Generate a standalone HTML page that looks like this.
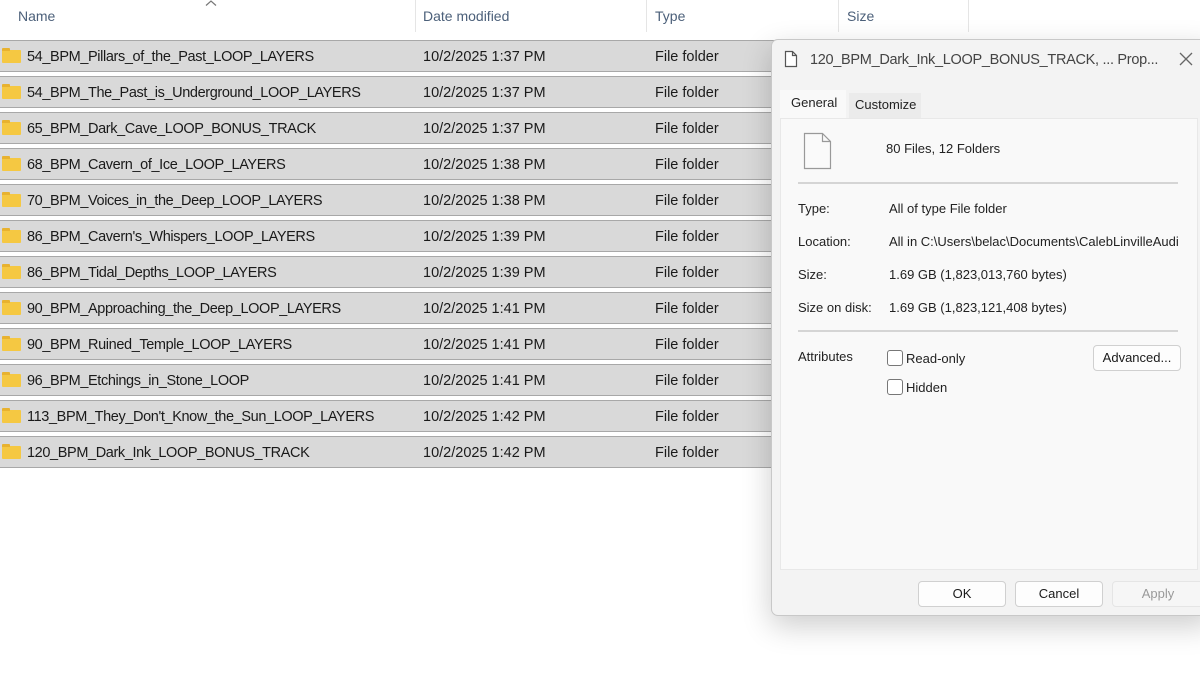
<!DOCTYPE html>
<html><head><style>
body{margin:0;width:1200px;height:675px;background:#fff;font-family:"Liberation Sans",sans-serif;position:relative;overflow:hidden;color:#1a1a1a}
.hd{position:absolute;top:8px;font-size:14px;color:#4c607a}
.sep{position:absolute;top:0;width:1px;height:32px;background:#e5e5e5}
.row{position:absolute;left:0;width:800px;height:30px;background:#d9d9d9;border-top:1px solid #a8a8a8;border-bottom:1px solid #a8a8a8;font-size:14.5px}
.row span{position:absolute;top:8px}
.row span:nth of-type(1){}
.nm{letter-spacing:-0.38px}
.fold{position:absolute;left:2px;top:9px;width:19px;height:13px;background:#f5c842;border-radius:1px}
.fold:before{content:"";position:absolute;left:0;top:-2px;width:8px;height:3px;background:#e8b22f;border-radius:1px 1px 0 0}
.dlg{position:absolute;left:771px;top:39px;width:440px;height:575px;background:#f3f3f3;border:1px solid #c8c8c8;border-radius:7px;box-shadow:0 10px 30px rgba(0,0,0,.2)}
.dlg *{position:absolute}
.lbl{font-size:13px;color:#222;white-space:nowrap}
.btn{background:#fdfdfd;border:1px solid #d0d0d0;border-radius:4px;font-size:13px;text-align:center;line-height:24px;height:24px}
.cb{width:14px;height:14px;border:1px solid #777;border-radius:3px;background:#fff}
</style></head><body>
<div class="hd" style="left:18px">Name</div>
<svg style="position:absolute;left:205px;top:0" width="12" height="6" viewBox="0 0 12 6"><path d="M1 5.5L6 1l5 4.5" fill="none" stroke="#777" stroke-width="1.2"/></svg>
<div class="hd" style="left:423px">Date modified</div>
<div class="hd" style="left:655px">Type</div>
<div class="hd" style="left:847px">Size</div>
<div class="sep" style="left:415px"></div><div class="sep" style="left:646px"></div><div class="sep" style="left:838px"></div><div class="sep" style="left:968px"></div>

<div class="row" style="top:40px"><div class="fold"></div><span class="nm" style="left:27px">54_BPM_Pillars_of_the_Past_LOOP_LAYERS</span><span style="left:423px">10/2/2025 1:37 PM</span><span style="left:655px">File folder</span></div>
<div class="row" style="top:76px"><div class="fold"></div><span class="nm" style="left:27px">54_BPM_The_Past_is_Underground_LOOP_LAYERS</span><span style="left:423px">10/2/2025 1:37 PM</span><span style="left:655px">File folder</span></div>
<div class="row" style="top:112px"><div class="fold"></div><span class="nm" style="left:27px">65_BPM_Dark_Cave_LOOP_BONUS_TRACK</span><span style="left:423px">10/2/2025 1:37 PM</span><span style="left:655px">File folder</span></div>
<div class="row" style="top:148px"><div class="fold"></div><span class="nm" style="left:27px">68_BPM_Cavern_of_Ice_LOOP_LAYERS</span><span style="left:423px">10/2/2025 1:38 PM</span><span style="left:655px">File folder</span></div>
<div class="row" style="top:184px"><div class="fold"></div><span class="nm" style="left:27px">70_BPM_Voices_in_the_Deep_LOOP_LAYERS</span><span style="left:423px">10/2/2025 1:38 PM</span><span style="left:655px">File folder</span></div>
<div class="row" style="top:220px"><div class="fold"></div><span class="nm" style="left:27px">86_BPM_Cavern's_Whispers_LOOP_LAYERS</span><span style="left:423px">10/2/2025 1:39 PM</span><span style="left:655px">File folder</span></div>
<div class="row" style="top:256px"><div class="fold"></div><span class="nm" style="left:27px">86_BPM_Tidal_Depths_LOOP_LAYERS</span><span style="left:423px">10/2/2025 1:39 PM</span><span style="left:655px">File folder</span></div>
<div class="row" style="top:292px"><div class="fold"></div><span class="nm" style="left:27px">90_BPM_Approaching_the_Deep_LOOP_LAYERS</span><span style="left:423px">10/2/2025 1:41 PM</span><span style="left:655px">File folder</span></div>
<div class="row" style="top:328px"><div class="fold"></div><span class="nm" style="left:27px">90_BPM_Ruined_Temple_LOOP_LAYERS</span><span style="left:423px">10/2/2025 1:41 PM</span><span style="left:655px">File folder</span></div>
<div class="row" style="top:364px"><div class="fold"></div><span class="nm" style="left:27px">96_BPM_Etchings_in_Stone_LOOP</span><span style="left:423px">10/2/2025 1:41 PM</span><span style="left:655px">File folder</span></div>
<div class="row" style="top:400px"><div class="fold"></div><span class="nm" style="left:27px">113_BPM_They_Don't_Know_the_Sun_LOOP_LAYERS</span><span style="left:423px">10/2/2025 1:42 PM</span><span style="left:655px">File folder</span></div>
<div class="row" style="top:436px"><div class="fold"></div><span class="nm" style="left:27px">120_BPM_Dark_Ink_LOOP_BONUS_TRACK</span><span style="left:423px">10/2/2025 1:42 PM</span><span style="left:655px">File folder</span></div>

<div class="dlg">
  <svg style="left:12px;top:10px" width="14" height="18" viewBox="0 0 14 18"><path d="M1.5 1.5h7l4 4v11h-11z M8.5 1.5v4h4" fill="#fff" stroke="#555" stroke-width="1.2"/></svg>
  <div style="left:38px;top:12px;font-size:14.5px;color:#444;white-space:nowrap;letter-spacing:-0.3px">120_BPM_Dark_Ink_LOOP_BONUS_TRACK, ... Prop...</div>
  <svg style="left:407px;top:12px" width="14" height="14" viewBox="0 0 14 14"><path d="M1 1L13 13M13 1L1 13" stroke="#666" stroke-width="1.3"/></svg>
  <div style="left:8px;top:50px;width:66px;height:30px;background:#f9f9f9"></div>
  <div class="lbl" style="left:19px;top:55px">General</div>
  <div style="left:77px;top:53px;width:72px;height:25px;background:#ebebeb"></div>
  <div class="lbl" style="left:83px;top:57px">Customize</div>
  <div style="left:8px;top:78px;width:416px;height:450px;background:#f9f9f9;border:1px solid #e8e8e8"></div>
  <svg style="left:31px;top:92px" width="30" height="38" viewBox="0 0 30 38"><path d="M1.5 1.5h18l8 8v27h-26z M19.5 1.5v8h8" fill="#fafafa" stroke="#999" stroke-width="1.2"/></svg>
  <div class="lbl" style="left:114px;top:101px">80 Files, 12 Folders</div>
  <div style="left:26px;top:142px;width:380px;height:2px;background:#d5d5d5"></div>
  <div class="lbl" style="left:26px;top:161px">Type:</div><div class="lbl" style="left:117px;top:161px">All of type File folder</div>
  <div class="lbl" style="left:26px;top:194px">Location:</div><div class="lbl" style="left:117px;top:194px">All in C:\Users\belac\Documents\CalebLinvilleAudi</div>
  <div class="lbl" style="left:26px;top:227px">Size:</div><div class="lbl" style="left:117px;top:227px">1.69 GB (1,823,013,760 bytes)</div>
  <div class="lbl" style="left:26px;top:260px">Size on disk:</div><div class="lbl" style="left:117px;top:260px">1.69 GB (1,823,121,408 bytes)</div>
  <div style="left:26px;top:290px;width:380px;height:2px;background:#d5d5d5"></div>
  <div class="lbl" style="left:26px;top:309px">Attributes</div>
  <div class="cb" style="left:115px;top:310px"></div><div class="lbl" style="left:134px;top:311px">Read-only</div>
  <div class="cb" style="left:115px;top:339px"></div><div class="lbl" style="left:134px;top:340px">Hidden</div>
  <div class="btn" style="left:321px;top:305px;width:86px">Advanced...</div>
  <div class="btn" style="left:146px;top:541px;width:86px">OK</div>
  <div class="btn" style="left:243px;top:541px;width:86px">Cancel</div>
  <div class="btn" style="left:340px;top:541px;width:90px;background:#f6f6f6;color:#999;border-color:#e5e5e5">Apply</div>
</div>
</body></html>
